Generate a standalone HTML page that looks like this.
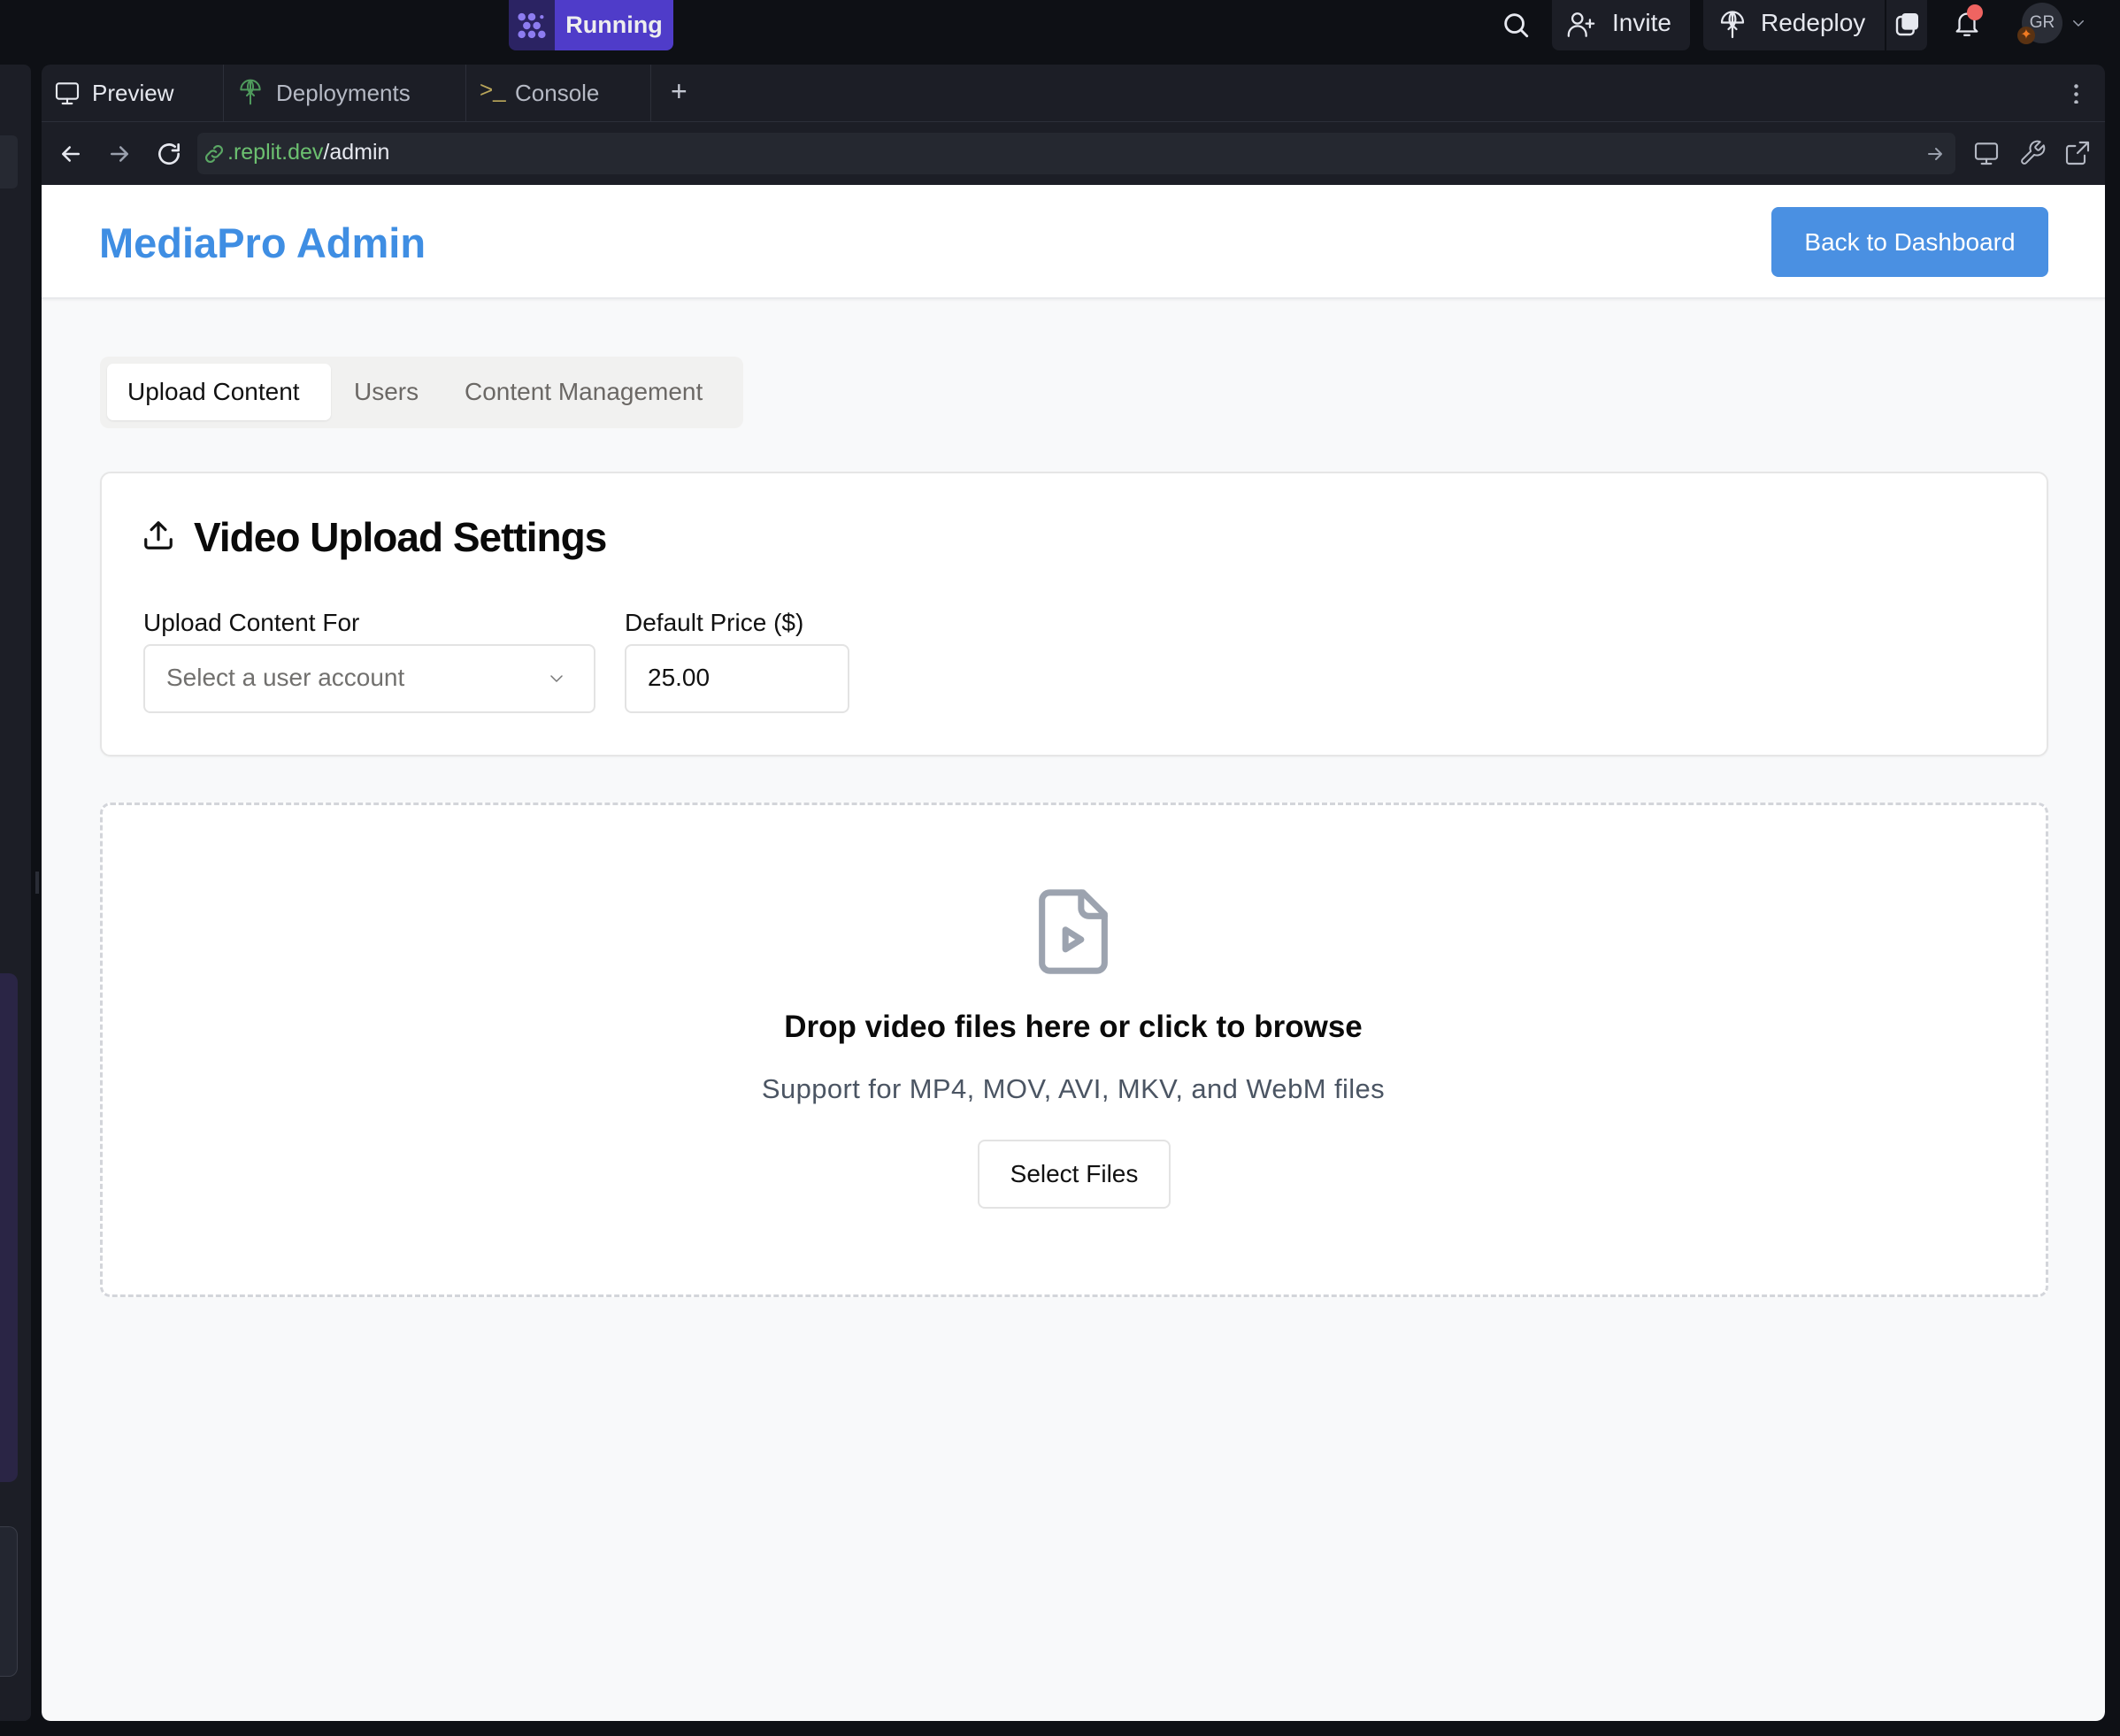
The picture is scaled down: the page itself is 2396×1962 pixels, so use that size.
<!DOCTYPE html>
<html><head><meta charset="utf-8"><style>
*{box-sizing:border-box;margin:0;padding:0}
body{width:2396px;height:1962px;background:#0e1015;font-family:"Liberation Sans",sans-serif;position:relative;overflow:hidden}
.a{position:absolute}
.tb{color:#e6e8ef;font-size:28px}
.ic{stroke:#e6e8ef;fill:none;stroke-width:2;stroke-linecap:round;stroke-linejoin:round}
</style></head><body>
<!-- top bar -->
<div class="a" style="left:575px;top:0;width:186px;height:57px;border-radius:0 0 8px 8px;overflow:hidden;display:flex">
 <div style="width:52px;background:#2b2363;display:flex;align-items:center;justify-content:center">
  <svg width="34" height="34" viewBox="0 0 24 24"><g fill="#8d7cf0"><circle cx="4" cy="5" r="3"/><circle cx="12" cy="5" r="3"/><circle cx="8" cy="12" r="3"/><circle cx="16" cy="12" r="3"/><circle cx="4" cy="19" r="3"/><circle cx="12" cy="19" r="3"/><circle cx="20" cy="19" r="3"/><circle cx="20" cy="5" r="1.5"/></g></svg>
 </div>
 <div style="flex:1;background:#4f3cc9;color:#eee;font-size:27px;font-weight:bold;display:flex;align-items:center;justify-content:center">Running</div>
</div>
<svg class="a" style="left:1696px;top:11px" width="34" height="34" viewBox="0 0 24 24"><g class="ic"><circle cx="11" cy="11" r="7"/><path d="M16 16l5 5"/></g></svg>
<div class="a" style="left:1754px;top:0;width:156px;height:57px;background:#1c1e26;border-radius:0 0 8px 8px"></div>
<svg class="a" style="left:1770px;top:11px" width="34" height="34" viewBox="0 0 24 24"><g class="ic" style="stroke-width:1.6"><circle cx="9" cy="7" r="4"/><path d="M2 21v-1a7 7 0 0 1 14 0v1M19 8v6M16 11h6"/></g></svg>
<div class="a tb" style="left:1822px;top:10px">Invite</div>
<div class="a" style="left:1925px;top:0;width:253px;height:57px;background:#1c1e26;border-radius:0 0 8px 8px"></div>
<div class="a" style="left:2130px;top:0;width:2px;height:57px;background:#0e1015"></div>
<svg class="a" style="left:1940px;top:9px" width="36" height="36" viewBox="0 0 24 24"><g class="ic" style="stroke-width:1.5"><path d="M4 11a8 8 0 0 1 16 0M4 11h16M12 3v19M12 3c-3 3-3 8 0 11M12 3c3 3 3 8 0 11M9 16l3-3 3 3"/></g></svg>
<div class="a tb" style="left:1990px;top:10px">Redeploy</div>
<svg class="a" style="left:2140px;top:11px" width="32" height="32" viewBox="0 0 24 24"><rect x="3" y="6" width="14" height="15" rx="3" fill="none" stroke="#e6e8ef" stroke-width="1.8"/><rect x="7" y="3" width="14" height="14" rx="3" fill="#e6e8ef"/></svg>
<svg class="a" style="left:2206px;top:9px" width="34" height="36" viewBox="0 0 24 24"><g class="ic" style="stroke-width:1.6"><path d="M6 16V10a6 6 0 0 1 12 0v6l2 2H4z M10 21h4"/></g></svg>
<div class="a" style="left:2223px;top:5px;width:18px;height:18px;border-radius:50%;background:#ef6461"></div>
<div class="a" style="left:2285px;top:3px;width:46px;height:46px;border-radius:50%;background:#2a2d36;color:#b8bcc8;font-size:19px;display:flex;align-items:center;justify-content:center">GR</div>
<div class="a" style="left:2280px;top:30px;width:20px;height:20px;border-radius:50%;background:#5a3212;color:#f07a22;font-size:16px;line-height:20px;text-align:center">✦</div>
<svg class="a" style="left:2340px;top:17px" width="18" height="18" viewBox="0 0 24 24"><path d="M5 9l7 7 7-7" class="ic" style="stroke:#9aa0ad"/></svg>

<!-- left sidebar -->
<div class="a" style="left:0;top:73px;width:35px;height:1872px;background:#1c1e26;border-radius:0 8px 8px 0"></div>
<div class="a" style="left:0;top:153px;width:20px;height:60px;background:#262932;border-radius:0 6px 6px 0"></div>
<div class="a" style="left:0;top:1100px;width:20px;height:575px;background:#2a2545;border-radius:0 10px 10px 0"></div>
<div class="a" style="left:0;top:1725px;width:20px;height:170px;background:#232630;border:1px solid #3a3d48;border-left:none;border-radius:0 10px 10px 0"></div>
<div class="a" style="left:40px;top:985px;width:4px;height:25px;background:#2a2d36"></div>

<!-- panel -->
<div class="a" style="left:47px;top:73px;width:2332px;height:1872px;background:#1c1e26;border-radius:10px;overflow:hidden">
 <div class="a" style="left:0;top:64px;width:100%;height:1px;background:#2c2f39"></div>
 <div class="a" style="left:205px;top:0;width:1px;height:64px;background:#2c2f39"></div>
 <div class="a" style="left:479px;top:0;width:1px;height:64px;background:#2c2f39"></div>
 <div class="a" style="left:688px;top:0;width:1px;height:64px;background:#2c2f39"></div>
 <svg class="a" style="left:13px;top:16px" width="32" height="32" viewBox="0 0 24 24"><g class="ic" style="stroke-width:1.6"><rect x="3" y="4" width="18" height="13" rx="2"/><path d="M12 17v4M8 21h8"/></g></svg>
 <div class="a tb" style="left:57px;top:17px;font-size:26px">Preview</div>
 <svg class="a" style="left:220px;top:14px" width="32" height="34" viewBox="0 0 24 24"><g class="ic" style="stroke:#4f9a5c;stroke-width:1.5"><path d="M4 10a8 8 0 0 1 16 0M4 10h16M12 2v20M12 2c-3 3-3 8 0 11M12 2c3 3 3 8 0 11M9 15l3-3 3 3"/></g></svg>
 <div class="a tb" style="left:265px;top:17px;font-size:26px;color:#b5b9c4">Deployments</div>
 <div class="a" style="left:495px;top:13px;font-size:26px;color:#b9a65a">&gt;_</div>
 <div class="a tb" style="left:535px;top:17px;font-size:26px;color:#b5b9c4">Console</div>
 <div class="a tb" style="left:711px;top:12px;font-size:32px;color:#c4c8d2">+</div>
 <div class="a" style="left:2297px;top:20px;width:5px;height:24px;background:radial-gradient(circle,#b5b9c4 2px,transparent 2.5px) 0 0/5px 9px repeat-y"></div>
 <!-- address row -->
 <svg class="a" style="left:18px;top:86px" width="30" height="30" viewBox="0 0 24 24"><path d="M19 12H5M11 6l-6 6 6 6" class="ic"/></svg>
 <svg class="a" style="left:73px;top:86px" width="30" height="30" viewBox="0 0 24 24"><path d="M5 12h14M13 6l6 6-6 6" class="ic" style="stroke:#9aa0ad"/></svg>
 <svg class="a" style="left:128px;top:85px" width="32" height="32" viewBox="0 0 24 24"><path d="M20 12a8 8 0 1 1-3-6.2M20 4v5h-5" class="ic"/></svg>
 <div class="a" style="left:176px;top:77px;width:1987px;height:47px;background:#252830;border-radius:7px"></div>
 <svg class="a" style="left:182px;top:88px" width="26" height="26" viewBox="0 0 24 24"><g class="ic" style="stroke:#5ba865"><path d="M10 14a4 4 0 0 0 6 0l3-3a4 4 0 0 0-6-6l-1 1M14 10a4 4 0 0 0-6 0l-3 3a4 4 0 0 0 6 6l1-1"/></g></svg>
 <div class="a" style="left:210px;top:85px;font-size:25px;color:#6cc070">.replit.dev<span style="color:#e6e8ef">/admin</span></div>
 <svg class="a" style="left:2128px;top:89px" width="24" height="24" viewBox="0 0 24 24"><path d="M5 12h14M13 6l6 6-6 6" class="ic" style="stroke:#9aa0ad"/></svg>
 <svg class="a" style="left:2182px;top:84px" width="32" height="32" viewBox="0 0 24 24"><g class="ic" style="stroke:#b5b9c4;stroke-width:1.6"><rect x="3" y="4" width="18" height="13" rx="2"/><path d="M12 17v4M8 21h8"/></g></svg>
 <svg class="a" style="left:2234px;top:84px" width="32" height="32" viewBox="0 0 24 24"><path d="M14.7 6.3a1 1 0 0 0 0 1.4l1.6 1.6a1 1 0 0 0 1.4 0l3.8-3.8a6 6 0 0 1-7.9 7.9l-6.9 6.9a2.1 2.1 0 0 1-3-3l6.9-6.9a6 6 0 0 1 7.9-7.9z" class="ic" style="stroke:#b5b9c4;stroke-width:1.5"/></svg>
 <svg class="a" style="left:2285px;top:84px" width="32" height="32" viewBox="0 0 24 24"><path d="M14 3h7v7M21 3l-9 9M18 14v5a2 2 0 0 1-2 2H5a2 2 0 0 1-2-2V8a2 2 0 0 1 2-2h5" class="ic" style="stroke:#b5b9c4;stroke-width:1.6"/></svg>

 <!-- content -->
 <div class="a" style="left:0;top:136px;width:2332px;height:1736px;background:#f8f9fa;border-radius:0 0 10px 10px;overflow:hidden">
  <div class="a" style="left:0;top:0;width:100%;height:129px;background:#fff;border-bottom:2px solid #e8e9ec;box-shadow:0 1px 3px rgba(0,0,0,.06)"></div>
  <div class="a" style="left:65px;top:38px;font-size:47px;font-weight:bold;color:#3f8ee3">MediaPro Admin</div>
  <div class="a" style="left:1955px;top:25px;width:313px;height:79px;background:#4a90e2;border-radius:8px;color:#fff;font-size:28px;display:flex;align-items:center;justify-content:center">Back to Dashboard</div>

  <div class="a" style="left:66px;top:194px;width:727px;height:81px;background:#f1f1f0;border-radius:10px"></div>
  <div class="a" style="left:74px;top:202px;width:253px;height:64px;background:#fff;border-radius:7px;box-shadow:0 1px 2px rgba(0,0,0,.08)"></div>
  <div class="a" style="left:97px;top:218px;font-size:28px;color:#111">Upload Content</div>
  <div class="a" style="left:353px;top:218px;font-size:28px;color:#6b6865">Users</div>
  <div class="a" style="left:478px;top:218px;font-size:28px;color:#6b6865">Content Management</div>

  <div class="a" style="left:66px;top:324px;width:2202px;height:322px;background:#fff;border:2px solid #e6e6e6;border-radius:12px;box-shadow:0 1px 2px rgba(0,0,0,.04)"></div>
  <svg class="a" style="left:113px;top:377px" width="38" height="38" viewBox="0 0 24 24"><g class="ic" style="stroke:#111;stroke-width:2"><path d="M12 15V3M7 8l5-5 5 5M3 15v4a2 2 0 0 0 2 2h14a2 2 0 0 0 2-2v-4"/></g></svg>
  <div class="a" style="left:172px;top:371px;font-size:46px;font-weight:bold;color:#0a0a0a;letter-spacing:-1px">Video Upload Settings</div>
  <div class="a" style="left:115px;top:479px;font-size:28px;color:#111">Upload Content For</div>
  <div class="a" style="left:659px;top:479px;font-size:28px;color:#111">Default Price ($)</div>
  <div class="a" style="left:115px;top:519px;width:511px;height:78px;background:#fff;border:2px solid #e3e3e3;border-radius:8px"></div>
  <div class="a" style="left:141px;top:541px;font-size:28px;color:#71706e">Select a user account</div>
  <svg class="a" style="left:570px;top:546px" width="24" height="24" viewBox="0 0 24 24"><path d="M6 9l6 6 6-6" class="ic" style="stroke:#777;stroke-width:1.5"/></svg>
  <div class="a" style="left:659px;top:519px;width:254px;height:78px;background:#fff;border:2px solid #e3e3e3;border-radius:8px"></div>
  <div class="a" style="left:685px;top:541px;font-size:28px;color:#111">25.00</div>

  <div class="a" style="left:66px;top:698px;width:2202px;height:559px;background:#fff;border:3px dashed #d3d5da;border-radius:12px"></div>
  <svg class="a" style="left:1113px;top:791px" width="106" height="106" viewBox="0 0 24 24"><g class="ic" style="stroke:#9ca3af;stroke-width:1.6"><path d="M14.5 2H6a2 2 0 0 0-2 2v16a2 2 0 0 0 2 2h12a2 2 0 0 0 2-2V7.5z"/><path d="M14 2v4a2 2 0 0 0 2 2h4"/><path d="M10 11.5v5l4-2.5z"/></g></svg>
  <div class="a" style="left:0;top:932px;width:2332px;text-align:center;font-size:35px;font-weight:bold;color:#0a0a0a">Drop video files here or click to browse</div>
  <div class="a" style="left:0;top:1004px;width:2332px;text-align:center;font-size:31px;color:#4b5563;letter-spacing:0.4px">Support for MP4, MOV, AVI, MKV, and WebM files</div>
  <div class="a" style="left:1058px;top:1079px;width:218px;height:78px;background:#fff;border:2px solid #e3e3e3;border-radius:8px;font-size:28px;color:#111;display:flex;align-items:center;justify-content:center">Select Files</div>
 </div>
</div>
</body></html>
